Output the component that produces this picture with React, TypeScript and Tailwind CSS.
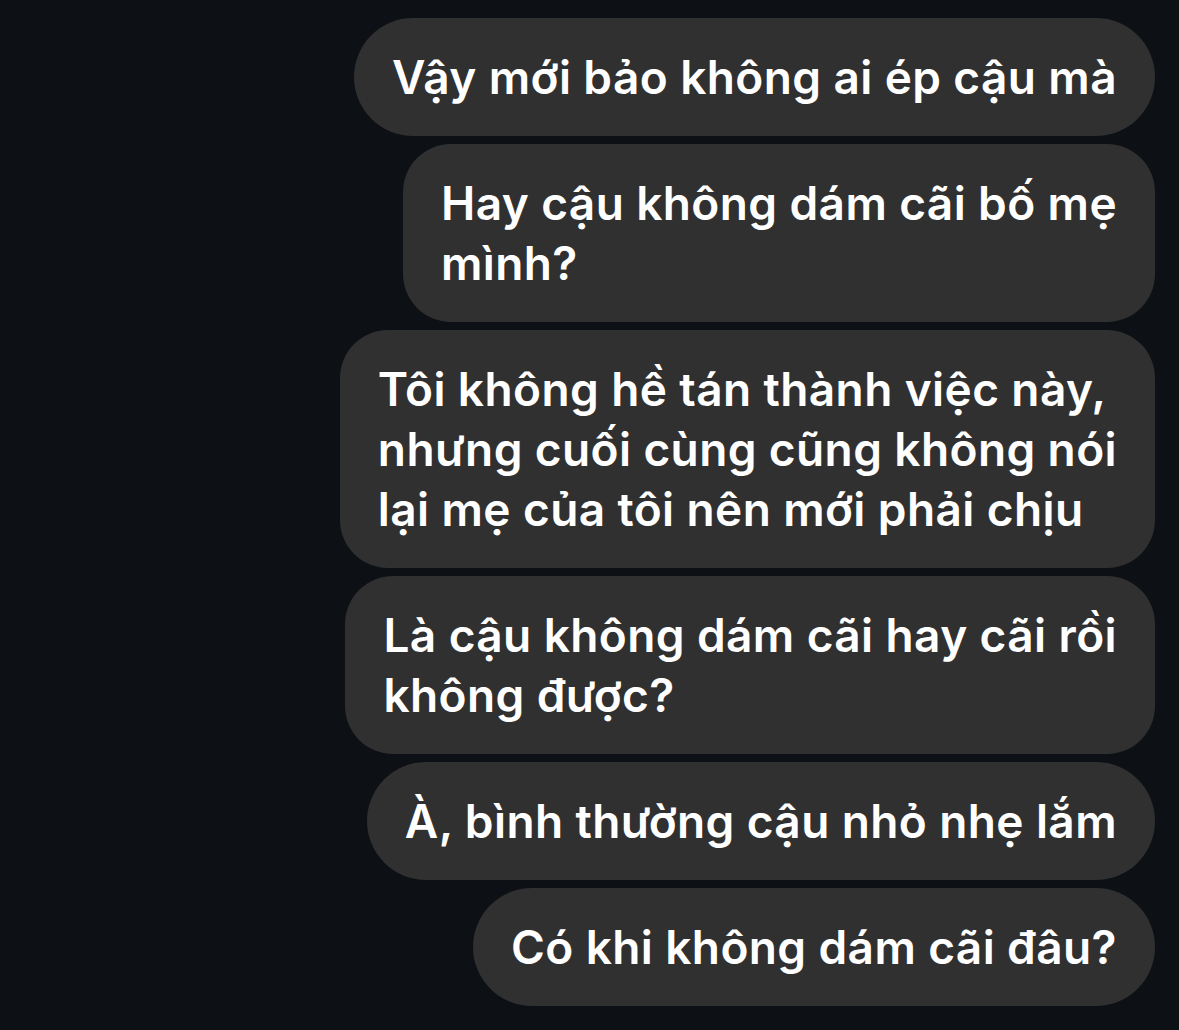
const messages: string[][] = [
  ["Vậy mới bảo không ai ép cậu mà"],
  ["Hay cậu không dám cãi bố mẹ", "mình?"],
  [
    "Tôi không hề tán thành việc này,",
    "nhưng cuối cùng cũng không nói",
    "lại mẹ của tôi nên mới phải chịu",
  ],
  ["Là cậu không dám cãi hay cãi rồi", "không được?"],
  ["À, bình thường cậu nhỏ nhẹ lắm"],
  ["Có khi không dám cãi đâu?"],
];

export default function App() {
  return (
    <div className="min-h-[1030px] w-full bg-[#0d1015] pt-[18px] pr-[24px] font-['Inter','Noto_Sans',sans-serif]">
      <div className="flex flex-col items-end gap-2">
        {messages.map((lines, i) => (
          <div
            key={i}
            className={
              lines.length > 1
                ? "rounded-[48px] bg-[#303030] px-[38px] py-[29px] text-[46px] font-semibold leading-[60px] tracking-[0.4px] text-white"
                : "rounded-full bg-[#303030] px-[38px] py-[29px] text-[46px] font-semibold leading-[60px] tracking-[0.4px] text-white"
            }
          >
            {lines.map((l, j) => (
              <div key={j}>{l}</div>
            ))}
          </div>
        ))}
      </div>
    </div>
  );
}
